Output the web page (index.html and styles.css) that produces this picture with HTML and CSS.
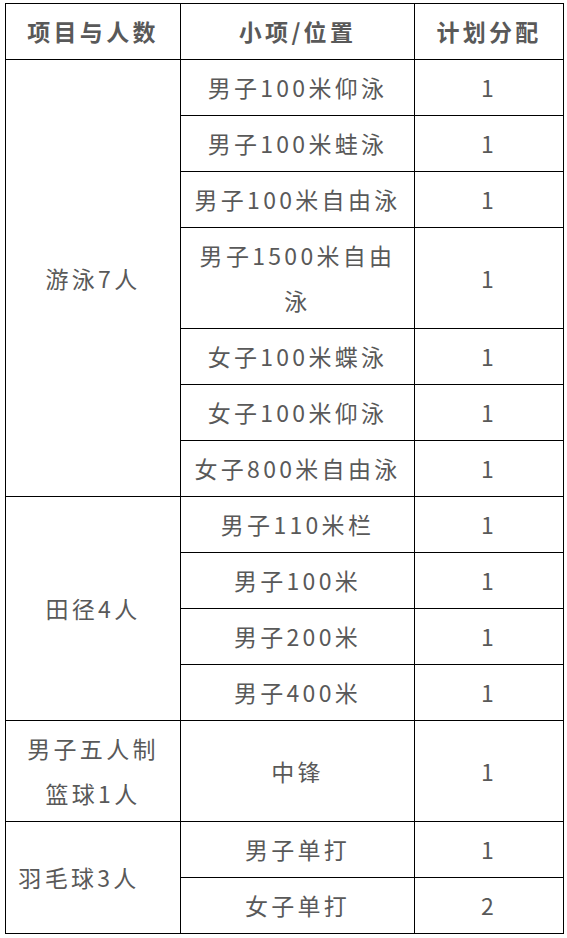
FILE: index.html
```html
<!DOCTYPE html>
<html lang="zh">
<head>
<meta charset="utf-8">
<link rel="stylesheet" href="styles.css">
</head>
<body>
<table class="plan">
  <colgroup>
    <col class="c1"><col class="c2"><col class="c3">
  </colgroup>
  <thead>
    <tr><th>项目与人数</th><th>小项/位置</th><th>计划分配</th></tr>
  </thead>
  <tbody>
    <tr><td rowspan="7">游泳7人</td><td>男子100米仰泳</td><td>1</td></tr>
    <tr><td>男子100米蛙泳</td><td>1</td></tr>
    <tr><td>男子100米自由泳</td><td>1</td></tr>
    <tr><td>男子1500米自由<br>泳</td><td>1</td></tr>
    <tr><td>女子100米蝶泳</td><td>1</td></tr>
    <tr><td>女子100米仰泳</td><td>1</td></tr>
    <tr><td>女子800米自由泳</td><td>1</td></tr>
    <tr><td rowspan="4">田径4人</td><td>男子110米栏</td><td>1</td></tr>
    <tr><td>男子100米</td><td>1</td></tr>
    <tr><td>男子200米</td><td>1</td></tr>
    <tr><td>男子400米</td><td>1</td></tr>
    <tr><td>男子五人制<br>篮球1人</td><td>中锋</td><td>1</td></tr>
    <tr><td rowspan="2" class="shift">羽毛球3人</td><td>男子单打</td><td>1</td></tr>
    <tr><td>女子单打</td><td>2</td></tr>
  </tbody>
</table>
</body>
</html>
```

FILE: styles.css
```css
html, body {
  margin: 0;
  padding: 0;
  background: #ffffff;
}
body {
  padding: 3px 0 0 5px;
  font-family: "Noto Sans CJK SC", "Noto Sans", sans-serif;
  color: #595959;
}
.plan {
  border-collapse: collapse;
  table-layout: fixed;
  width: 558px;
}
.c1 { width: 175px; }
.c2 { width: 234px; }
.c3 { width: 149px; }
.plan th,
.plan td {
  border: 1px solid #000;
  padding: 5px 2px;
  font-size: 23px;
  line-height: 45px;
  letter-spacing: 3.3px;
  text-align: center;
  vertical-align: middle;
  white-space: nowrap;
}
.plan th {
  font-weight: bold;
}
.plan td.shift {
  padding-right: 30px;
}
```
